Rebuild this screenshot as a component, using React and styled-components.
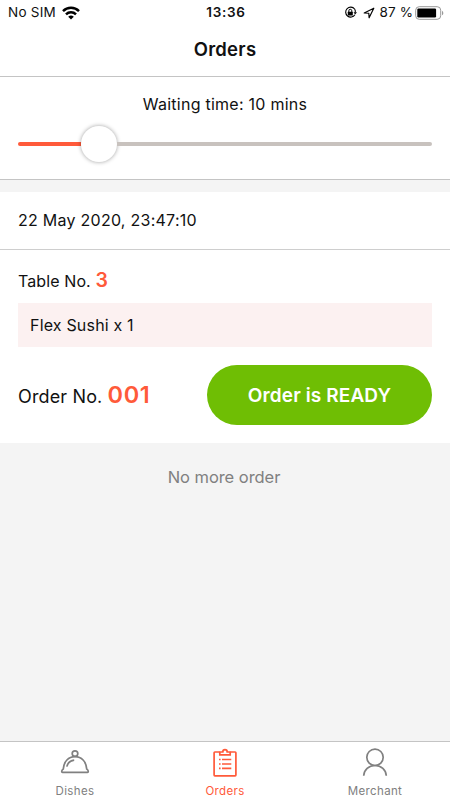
import React from "react";
import styled, { createGlobalStyle } from "styled-components";

const ACCENT = "#ff5a3a";
const GREY = "#808080";

const GlobalStyle = createGlobalStyle`
  *, *::before, *::after { box-sizing: border-box; }
  body { margin: 0; background: #f4f4f4; }
  button { font: inherit; border: 0; padding: 0; background: none; }
`;

const Screen = styled.div`
  display: flex;
  flex-direction: column;
  width: 450px;
  height: 800px;
  overflow: hidden;
  background: #f4f4f4;
  color: #111;
  font-family: Inter, "Liberation Sans", sans-serif;
  font-size: 16px;
  white-space: nowrap;
`;

const Header = styled.header`
  height: 77px;
  flex: none;
  background: #fff;
  border-bottom: 1px solid #c4c4c4;
`;

const StatusBar = styled.div`
  display: grid;
  grid-template-columns: 1fr auto 1fr;
  align-items: center;
  height: 25px;
  padding: 0 6px 0 8px;
  font-size: 13.5px;
  line-height: 25px;
`;

const Carrier = styled.div`
  display: flex;
  align-items: center;
  gap: 6px;
  letter-spacing: 0.25px;
`;

const Clock = styled.div`
  font-weight: 600;
  letter-spacing: 0.7px;
`;

const Indicators = styled.div`
  display: flex;
  align-items: center;
  justify-content: flex-end;
`;

const LocationGap = styled.span`
  display: flex;
  margin-left: 6px;
`;

const Percent = styled.span`
  margin: 0 2px 0 5px;
  letter-spacing: 0.1px;
`;

const Title = styled.h1`
  margin: 10px 0 0;
  font-size: 18.5px;
  font-weight: 600;
  line-height: 28px;
  letter-spacing: 0.25px;
  text-align: center;
`;

const WaitPanel = styled.section`
  flex: none;
  height: 103px;
  padding: 15px 18px 0;
  background: #fff;
  border-bottom: 1px solid #c4c4c4;
`;

const WaitLabel = styled.div`
  line-height: 24px;
  letter-spacing: 0.25px;
  text-align: center;
`;

const Slider = styled.div`
  display: flex;
  align-items: center;
  height: 38px;
  margin-top: 9px;
`;

const Track = styled.div`
  flex: ${(p) => (p.$filled ? "0 0 63px" : "1")};
  height: 4px;
  background: ${(p) => (p.$filled ? ACCENT : "#c8c2be")};
  border-radius: ${(p) => (p.$filled ? "2px 0 0 2px" : "0 2px 2px 0")};
`;

const Thumb = styled.div`
  flex: none;
  width: 36px;
  height: 36px;
  border-radius: 50%;
  background: #fff;
  box-shadow: 0 0 4px rgba(0, 0, 0, 0.38);
`;

const OrderCard = styled.article`
  flex: none;
  height: 251px;
  margin-top: 12px;
  background: #fff;
`;

const OrderDate = styled.div`
  height: 58px;
  padding-left: 18px;
  border-bottom: 1px solid #cecece;
  line-height: 56px;
  letter-spacing: 0.26px;
`;

const OrderBody = styled.div`
  padding: 0 18px;
`;

const TableLine = styled.div`
  height: 53px;
  padding-top: 18px;
  line-height: 24px;
  letter-spacing: 0.1px;
`;

const Value = styled.b`
  color: ${ACCENT};
  font-size: ${(p) => p.$size};
  font-weight: 600;
  letter-spacing: 0.6px;
`;

const Dish = styled.div`
  height: 44px;
  padding-left: 12px;
  background: #fcf1f1;
  line-height: 44px;
  letter-spacing: 0.18px;
`;

const OrderFooter = styled.div`
  display: flex;
  align-items: center;
  justify-content: space-between;
  margin-top: 18px;
  font-size: 18px;
`;

const OrderNumber = styled.div`
  padding-bottom: 2px;
  letter-spacing: 0.14px;
`;

const ReadyButton = styled.button`
  width: 225px;
  height: 60px;
  border-radius: 30px;
  background: #6fbe04;
  color: #fff;
  font-size: 19px;
  font-weight: 600;
  letter-spacing: 0.12px;
`;

const EmptyNote = styled.p`
  flex: 1;
  margin: 22px 2px 0 0;
  color: ${GREY};
  font-size: 16.5px;
  line-height: 24px;
  letter-spacing: -0.05px;
  text-align: center;
`;

const TabBar = styled.nav`
  display: grid;
  grid-template-columns: repeat(3, 1fr);
  flex: none;
  height: 59px;
  background: #fff;
  border-top: 1px solid #c4c4c4;
`;

const Tab = styled.button`
  display: flex;
  flex-direction: column;
  align-items: center;
  padding-top: 5px;
  color: ${(p) => (p.$active ? ACCENT : GREY)};
  font-size: 11.5px;
  line-height: 18px;
  letter-spacing: 0.35px;

  svg { margin-bottom: 3px; }
`;

const WifiIcon = () => (
  <svg width="18" height="14" viewBox="0 0 18 14">
    <g fill="none" stroke="#000" strokeWidth="2.5">
      <path d="M1 5.1a11.5 11.5 0 0 1 16 0" />
      <path d="M4 8.3a7.1 7.1 0 0 1 10 0" />
    </g>
    <path d="M6.2 10.8a4 4 0 0 1 5.6 0L9 13.5z" />
  </svg>
);

const LockIcon = () => (
  <svg width="13" height="13" viewBox="0 0 13 13">
    <path d="M10.6 3A5 5 0 1 0 10.9 8.8" fill="none" stroke="#000" strokeWidth="1.1" />
    <path d="M9.5 6.2h3.5L11.2 8.5z" />
    <path d="M10.6 3a5 5 0 0 1 .7 3.4" fill="none" stroke="#000" strokeWidth="1.1" />
    <rect x="3.8" y="5.8" width="5" height="3.7" rx=".5" />
    <path d="M4.8 6V4.8a1.5 1.5 0 0 1 3 0V6" fill="none" stroke="#000" />
  </svg>
);

const LocationIcon = () => (
  <svg width="12" height="12" viewBox="0 0 12 12">
    <path d="M1.2 6 10.8 1.2 6.1 10.8 5.8 6.2z" fill="none" stroke="#000" strokeWidth="1.15" strokeLinejoin="round" />
  </svg>
);

const BatteryIcon = () => (
  <svg width="29" height="14" viewBox="0 0 29 14">
    <rect x=".7" y=".7" width="25" height="12.6" rx="3.5" fill="none" stroke="#999" />
    <rect x="2.3" y="2.5" width="18.8" height="9" rx="1.2" />
    <path d="M27 4.7c1.8.8 1.8 3.8 0 4.6z" fill="#999" />
  </svg>
);

const DishIcon = () => (
  <svg width="30" height="32" viewBox="0 0 30 32" fill="none" stroke="currentColor" strokeWidth="1.7">
    <circle cx="15" cy="6.6" r="2.8" />
    <path d="M3.3 21.9C3.9 14.4 8.4 9.7 15 9.7S26.1 14.4 26.7 21.9c1 .5 1.6 1.4 1.6 2.7 0 .5-.3.8-.8.8H2.5c-.5 0-.8-.3-.8-.8 0-1.3.6-2.2 1.6-2.7z" />
    <path d="M6.8 19.6C7.7 16.1 10.4 13.4 14.2 13.1" />
  </svg>
);

const ClipboardIcon = () => (
  <svg width="30" height="32" viewBox="0 0 30 32" fill="none" stroke="currentColor" strokeWidth="1.7">
    <path d="M9.5 5H4.9a.8.8 0 0 0-.8.8v22.3c0 .5.3.8.8.8h20.2c.5 0 .8-.3.8-.8V5.8a.8.8 0 0 0-.8-.8h-4.6" />
    <path d="M9.8 7.8V5H12.8c0-3.2 4.4-3.2 4.4 0h3v2.8z" />
    <path d="M9 12.5h1.6M12 12.5h9.3M9 17h1.6M12 17h9.3M9 21.4h1.6M12 21.4h9.3" />
  </svg>
);

const PersonIcon = () => (
  <svg width="30" height="32" viewBox="0 0 30 32" fill="none" stroke="currentColor" strokeWidth="1.7">
    <circle cx="15" cy="10.3" r="8.2" />
    <path d="M3.7 28.8C4 23 8.8 18.5 15 18.5s11 4.5 11.3 10.3" />
  </svg>
);

const TABS = [
  { label: "Dishes", Icon: DishIcon },
  { label: "Orders", Icon: ClipboardIcon, active: true },
  { label: "Merchant", Icon: PersonIcon },
];

export default function App() {
  return (
    <Screen>
      <GlobalStyle />
      <Header>
        <StatusBar>
          <Carrier>No SIM <WifiIcon /></Carrier>
          <Clock>13:36</Clock>
          <Indicators>
            <LockIcon />
            <LocationGap><LocationIcon /></LocationGap>
            <Percent>87 %</Percent>
            <BatteryIcon />
          </Indicators>
        </StatusBar>
        <Title>Orders</Title>
      </Header>
      <WaitPanel>
        <WaitLabel>Waiting time: 10 mins</WaitLabel>
        <Slider>
          <Track $filled />
          <Thumb />
          <Track />
        </Slider>
      </WaitPanel>
      <OrderCard>
        <OrderDate>22 May 2020, 23:47:10</OrderDate>
        <OrderBody>
          <TableLine>Table No. <Value $size="19.5px">3</Value></TableLine>
          <Dish>Flex Sushi x 1</Dish>
          <OrderFooter>
            <OrderNumber>Order No. <Value $size="23.5px">001</Value></OrderNumber>
            <ReadyButton>Order is READY</ReadyButton>
          </OrderFooter>
        </OrderBody>
      </OrderCard>
      <EmptyNote>No more order</EmptyNote>
      <TabBar>
        {TABS.map(({ label, Icon, active }) => (
          <Tab key={label} $active={active}><Icon />{label}</Tab>
        ))}
      </TabBar>
    </Screen>
  );
}
